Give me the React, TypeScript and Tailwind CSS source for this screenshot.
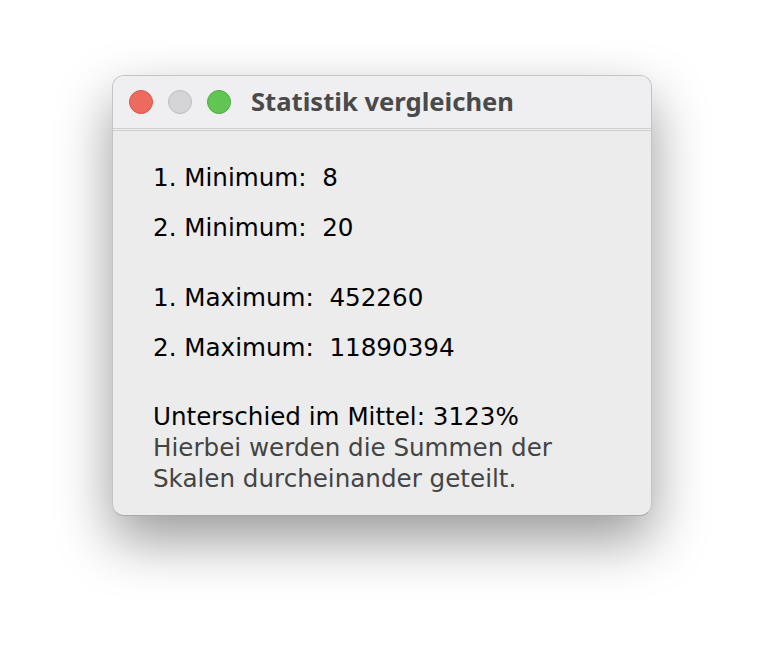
import React from 'react';

const stats = [
  { label: '1. Minimum:', value: '8' },
  { label: '2. Minimum:', value: '20' },
];
const maxes = [
  { label: '1. Maximum:', value: '452260' },
  { label: '2. Maximum:', value: '11890394' },
];

const Row: React.FC<{ label: string; value: string; className?: string }> = ({ label, value, className }) => (
  <div className={`whitespace-pre ${className ?? ''}`}>
    {label}  {value}
  </div>
);

export default function App() {
  return (
    <div className="min-h-[664px] w-[764px] bg-white pt-[75px] pl-[112px]">
      <div
        className="w-[540px] h-[441px] rounded-[12px] bg-[#ececec] border border-[#c4c4c4] border-b-[#a8a8a8] overflow-hidden shadow-[0_24px_55px_rgba(0,0,0,0.4)] flex flex-col"
      >
        {/* title bar */}
        <div className="h-[55px] bg-[#efeff1] border-b-[3px] border-double border-[#cfcfcf] flex items-center pl-[16px] shrink-0">
          <div className="flex gap-[15px]">
            <span className="w-[24px] h-[24px] rounded-full bg-[#ed6a5e] border border-[#d9554a]" />
            <span className="w-[24px] h-[24px] rounded-full bg-[#d5d5d7] border border-[#bcbcbe]" />
            <span className="w-[24px] h-[24px] rounded-full bg-[#61c554] border border-[#4eab41]" />
          </div>
          <div className="ml-[20px] text-[25.6px] font-bold text-[#4a4a4a] font-['Noto_Sans',sans-serif]">
            Statistik vergleichen
          </div>
        </div>

        {/* content */}
        <div className="pl-[40px] pt-[31px] text-[24.6px] leading-[31px] text-black font-['DejaVu_Sans',sans-serif]">
          <Row {...stats[0]} className="mb-[19px]" />
          <Row {...stats[1]} className="mb-[39px]" />
          <Row {...maxes[0]} className="mb-[19px]" />
          <Row {...maxes[1]} className="mb-[38px]" />
          <div>Unterschied im Mittel: 3123%</div>
          <div className="text-[#444444]">Hierbei werden die Summen der</div>
          <div className="text-[#444444]">Skalen durcheinander geteilt.</div>
        </div>
      </div>
    </div>
  );
}
